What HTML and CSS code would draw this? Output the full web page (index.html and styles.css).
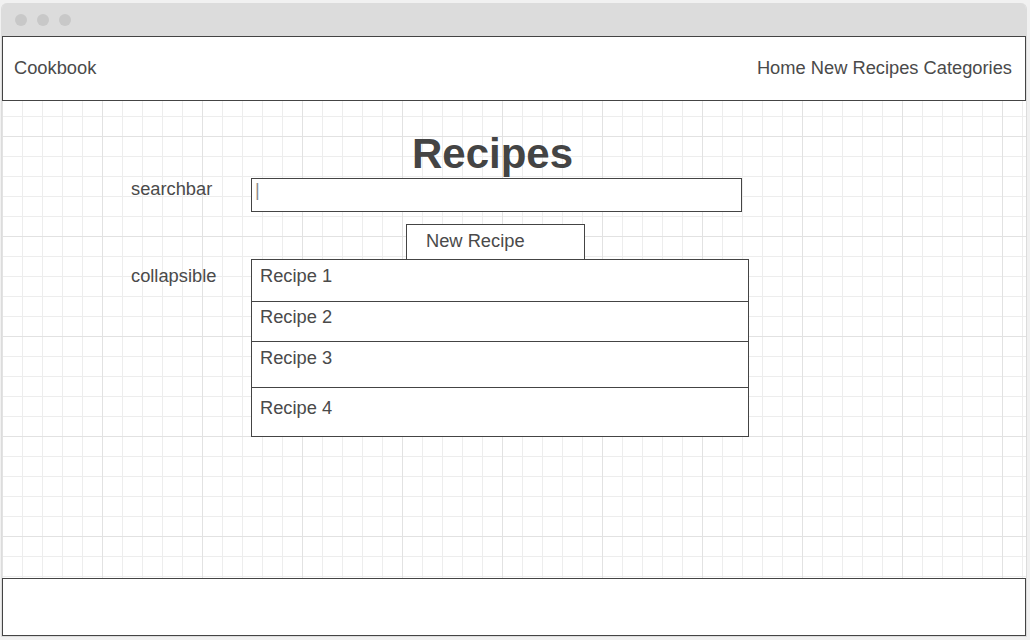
FILE: index.html
```html
<!DOCTYPE html>
<html lang="en">
<head>
    <meta charset="UTF-8">
    <meta name="viewport" content="width=device-width, initial-scale=1.0">
    <title>Cookbook - Recipes</title>
    <link rel="stylesheet" href="styles.css">
</head>
<body>
    <div class="window">
        <!-- Browser chrome -->
        <div class="titlebar">
            <span class="dot"></span>
            <span class="dot"></span>
            <span class="dot"></span>
        </div>

        <div class="window-body">
            <header class="site-header">
                <span class="brand">Cookbook</span>
                <nav class="nav">
                    <a href="#">Home</a>
                    <a href="#">New Recipes</a>
                    <a href="#">Categories</a>
                </nav>
            </header>

            <main class="page">
                <h1 class="page-title">Recipes</h1>

                <div class="field-row">
                    <span class="field-label label-search">searchbar</span>
                    <div class="searchbar"><span class="caret">|</span></div>
                </div>

                <div class="actions">
                    <button class="btn-new">New Recipe</button>
                </div>

                <div class="field-row">
                    <span class="field-label label-collapsible">collapsible</span>
                    <div class="collapsible">
                        <div class="recipe-item item-1">Recipe 1</div>
                        <div class="recipe-item item-2">Recipe 2</div>
                        <div class="recipe-item item-3">Recipe 3</div>
                        <div class="recipe-item item-4">Recipe 4</div>
                    </div>
                </div>
            </main>

            <footer class="site-footer"></footer>
        </div>
    </div>
</body>
</html>
```

FILE: styles.css
```css
/* Reset and Base Styles */
* {
    margin: 0;
    padding: 0;
    box-sizing: border-box;
}

body {
    font-family: "Liberation Sans", Arial, sans-serif;
    font-size: 18.3px;
    line-height: 20px;
    color: #4a4a4a;
    background-color: #f1f1f1;
    height: 640px;
    overflow: hidden;
}

/* Window frame */
.window {
    margin: 3px 3px 0 1px;
    border: 1px solid #dcdcdc;
    border-top: none;
    border-radius: 6px 6px 0 0;
    overflow: hidden;
}

.titlebar {
    height: 33px;
    background-color: #dcdcdc;
    display: flex;
    align-items: center;
    gap: 10px;
    padding-left: 13px;
}

.dot {
    width: 12px;
    height: 12px;
    border-radius: 50%;
    background-color: #c8c8c8;
}

/* Wireframe grid paper */
.window-body {
    height: 600px;
    display: flex;
    flex-direction: column;
    background-color: #ffffff;
    background-image:
        linear-gradient(#e2e2e2 1px, transparent 1px),
        linear-gradient(90deg, #e2e2e2 1px, transparent 1px),
        linear-gradient(#ededed 1px, transparent 1px),
        linear-gradient(90deg, #ededed 1px, transparent 1px);
    background-size: 100px 100px, 100px 100px, 20px 20px, 20px 20px;
}

/* Header */
.site-header {
    height: 65px;
    flex-shrink: 0;
    display: flex;
    align-items: center;
    justify-content: space-between;
    padding: 0 13px 2px 11px;
    background-color: #ffffff;
    border: 1px solid #444444;
}

.nav a {
    color: #4a4a4a;
    text-decoration: none;
}

/* Main content */
.page {
    flex: 1;
    padding: 28px 0 0 129px;
}

.page-title {
    width: 611px;
    padding-left: 120px;
    padding-right: 8px;
    font-size: 42px;
    line-height: 49px;
    font-weight: 700;
    text-align: center;
    color: #444444;
}

.field-row {
    display: flex;
    align-items: flex-start;
}

.field-label {
    width: 120px;
    flex-shrink: 0;
    line-height: 19px;
}

.label-search {
    padding-top: 1px;
}

.label-collapsible {
    padding-top: 7px;
}

.searchbar {
    width: 491px;
    height: 34px;
    padding-left: 3px;
    background-color: #ffffff;
    border: 1px solid #444444;
}

.caret {
    display: block;
    color: #8a8a8a;
    line-height: 22px;
}

.actions {
    margin: 12px 0 0 275px;
}

.btn-new {
    width: 179px;
    height: 35px;
    padding: 6px 0 8px 19px;
    font-family: inherit;
    font-size: 18.3px;
    line-height: 20px;
    color: #4a4a4a;
    text-align: left;
    background-color: #ffffff;
    border: 1px solid #444444;
    border-bottom: none;
    display: block;
}

/* Collapsible list */
.collapsible {
    width: 498px;
    background-color: #ffffff;
    border: 1px solid #444444;
}

.recipe-item {
    padding: 6px 8px 0;
    border-top: 1px solid #444444;
}

.recipe-item:first-child {
    border-top: none;
}

.item-1 { height: 41px; }
.item-2 { height: 40px; padding-top: 5px; }
.item-3 { height: 46px; }
.item-4 { height: 49px; padding-top: 10px; }

/* Footer */
.site-footer {
    height: 58px;
    flex-shrink: 0;
    background-color: #ffffff;
    border: 1px solid #444444;
}
```
